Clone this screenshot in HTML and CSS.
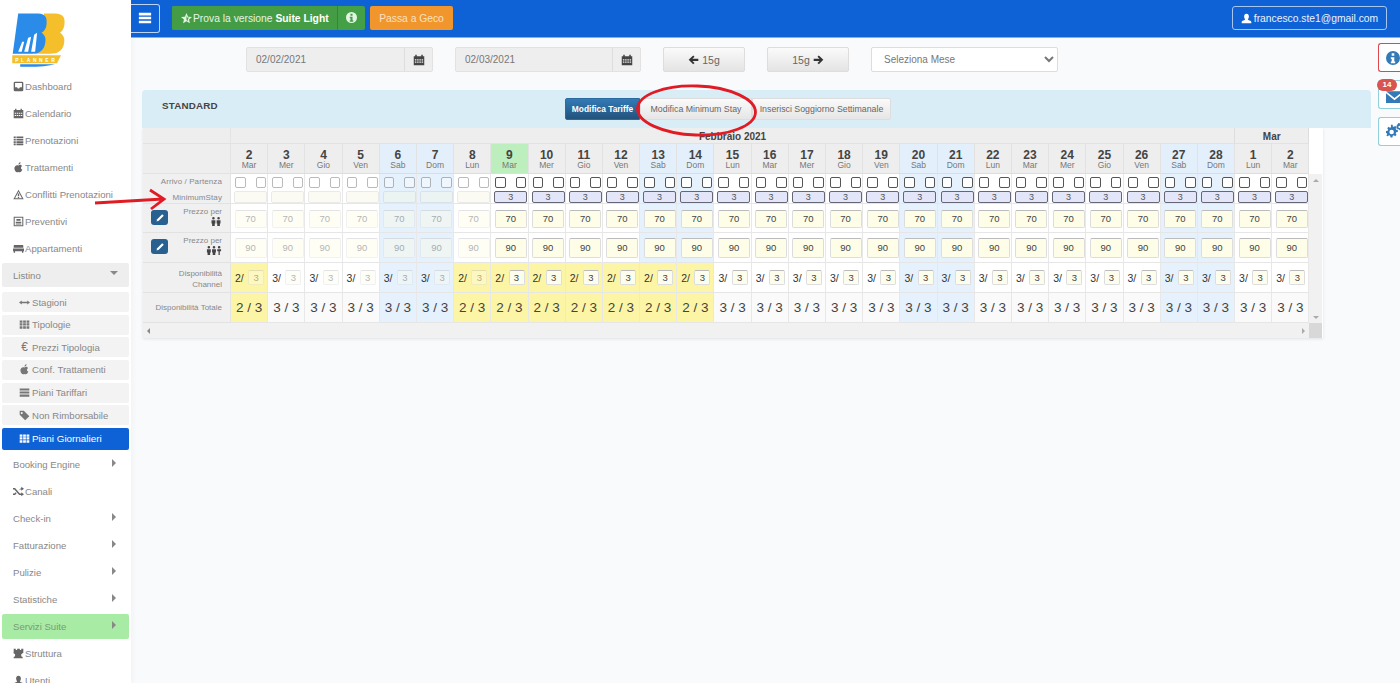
FILE: index.html
```html
<!DOCTYPE html>
<html lang="it">
<head>
<meta charset="utf-8">
<title>BB Planner</title>
<link rel="stylesheet" href="styles.css">
</head>
<body>
<svg class="defs" width="0" height="0">
<defs>
<symbol id="inbox" viewBox="0 0 16 16"><path d="M3 1h10a2 2 0 0 1 2 2v10a2 2 0 0 1-2 2H3a2 2 0 0 1-2-2V3a2 2 0 0 1 2-2zm0 2v6h3l1 2h2l1-2h3V3z"/></symbol>
<symbol id="cal" viewBox="0 0 16 16"><path d="M1 3h2V1h2v2h6V1h2v2h2v12H1zm1.500 4v1.500h2V7zm3 0v1.500h2V7zm3 0v1.500h2V7zm3 0v1.500h2V7zm-9 3v1.500h2V10zm3 0v1.500h2V10zm3 0v1.500h2V10zm3 0v1.500h2V10z"/></symbol>
<symbol id="list" viewBox="0 0 16 16"><path d="M1 2h3v2.500H1zm4 0h10v2.500H5zM1 5.500h3V8H1zm4 0h10V8H5zM1 9h3v2.500H1zm4 0h10v2.500H5zm-4 3.500h3V15H1zm4 0h10V15H5z"/></symbol>
<symbol id="apple" viewBox="0 0 16 16"><path d="M8 5c1-1 4-1.500 5 1-2 1-2 4 .5 5-1 2.500-2 4-3.500 4-1 0-1.500-.5-2-.5s-1 .5-2 .5C4 15 2 12 2 9c0-3 3-5.500 6-4zM8 4c0-2 1-3.500 3-4 0 2-1 3.500-3 4z"/></symbol>
<symbol id="warn" viewBox="0 0 16 16"><path d="M8 1l7.500 14H.5zm0 3L3 13.500h10zm-1 2.500h2v4H7zm0 5h2v1.500H7z" fill-rule="evenodd"/></symbol>
<symbol id="alt" viewBox="0 0 16 16"><path d="M1 1h14v14H1zm1.500 1.500v11h11v-11zM5 4.500h6V7H5zM4 8.500h8V10H4zm0 2.500h8v1.500H4z" fill-rule="evenodd"/></symbol>
<symbol id="bed" viewBox="0 0 16 16"><path d="M2 3h12a1 1 0 0 1 1 1v3H1V4a1 1 0 0 1 1-1zM0 8h16v4h-1v2h-2v-2H3v2H1v-2H0z"/></symbol>
<symbol id="arrows" viewBox="0 0 16 16"><path d="M0 8l4-3v2h8V5l4 3-4 3V9H4v2z"/></symbol>
<symbol id="grid" viewBox="0 0 16 16"><path d="M1 2h4v3.300H1zm5 0h4v3.300H6zm5 0h4v3.300h-4zM1 6.300h4v3.300H1zm5 0h4v3.300H6zm5 0h4v3.300h-4zM1 10.700h4V14H1zm5 0h4V14H6zm5 0h4V14h-4z"/></symbol>
<symbol id="menu" viewBox="0 0 16 16"><path d="M1 2h14v3H1zm0 4.500h14v3H1zM1 11h14v3H1z"/></symbol>
<symbol id="tag" viewBox="0 0 16 16"><path d="M1 1h6l8 8-6 6-8-8zm3 2a1.500 1.500 0 1 0 0 3 1.500 1.500 0 0 0 0-3z" fill-rule="evenodd"/></symbol>
<symbol id="shuffle" viewBox="0 0 16 16"><path d="M0 3h3l7 8h2V9l4 3-4 3v-2H9L2 5H0zm0 8h2l2-2 1.300 1.500L3 13H0zM9 5.500L12 3V1l4 3-4 3V5h-2L8 6.800z"/></symbol>
<symbol id="tower" viewBox="0 0 16 16"><path d="M1 1h3v2h2V1h4v2h2V1h3v6l-3 2v3l2 1v2H1v-2l2-1V9L0 7h1z"/></symbol>
<symbol id="user" viewBox="0 0 16 16"><path d="M8 1c2.200 0 3.500 1.700 3.500 4S10 9 10 9.500c0 1 5 1.500 5 3.500v2H1v-2c0-2 5-2.500 5-3.500C6 9 4.500 7.300 4.500 5S5.800 1 8 1z"/></symbol>
<symbol id="star" viewBox="0 0 16 16"><path d="M8 0l2.300 5.300 5.700.5-4.300 3.800L13 15 8 12l-5 3 1.300-5.400L0 5.800l5.700-.5zm0 4v6l2.500 1.500-.7-2.800 2.100-1.900-2.800-.2z" fill-rule="evenodd"/></symbol>
<symbol id="info" viewBox="0 0 16 16"><path d="M8 0a8 8 0 1 1 0 16A8 8 0 0 1 8 0zM6.500 2.500v3h3v-3zM5.500 7v2h1v3h-1v2h5v-2h-1V7z" fill-rule="evenodd"/></symbol>
<symbol id="left" viewBox="0 0 16 16"><path d="M7.500 2l2 2-3 3H15v3H6.500l3 3-2 2L1 8.500z"/></symbol>
<symbol id="right" viewBox="0 0 16 16"><path d="M8.500 2l-2 2 3 3H1v3h8.500l-3 3 2 2L15 8.500z"/></symbol>
<symbol id="mail" viewBox="0 0 16 16"><path d="M0 3h16L8 9.500zm0 2l8 6.500L16 5v9H0z"/></symbol>
<symbol id="gears" viewBox="0 0 16 16"><path d="M6 3l1 .4 1.200-.8 1.200 1.200-.8 1.200.4 1 1.500.3v1.700l-1.500.3-.4 1 .8 1.200-1.200 1.200-1.200-.8-1 .4-.3 1.500H4l-.3-1.500-1-.4-1.200.8L.3 11.300l.8-1.200-.4-1L0 8.800V7.100l1.500-.3.4-1-.8-1.200 1.200-1.200 1.200.8 1-.4L4.300 1.500H6zM5 6a2 2 0 1 0 0 4 2 2 0 0 0 0-4zM12 0l.5 1 1-.2.6 1 1 .2v1.200l-.8.6.2 1-1 .6-.2 1h-1.200l-.6-.8-1 .2-.6-1-1-.2V3.400l.8-.6-.2-1 1-.6.2-1zm0 2.500a1 1 0 1 0 0 2 1 1 0 0 0 0-2z" fill-rule="evenodd"/></symbol>
<symbol id="pen" viewBox="0 0 16 16"><path d="M11.500 2l2.500 2.500L6 12.500 2.500 13.500 3.500 10z"/></symbol>
<symbol id="two" viewBox="0 0 18 14"><path d="M5 0a2 2 0 1 1 0 4 2 2 0 0 1 0-4zm8 0a2 2 0 1 1 0 4 2 2 0 0 1 0-4zM2 5h6v5H7v4H3v-4H2zm8 0h6v5h-1v4h-4v-4h-1z"/></symbol>
<symbol id="three" viewBox="0 0 24 14"><path d="M4 0a2 2 0 1 1 0 4 2 2 0 0 1 0-4zm8 0a2 2 0 1 1 0 4 2 2 0 0 1 0-4zm8 0a2 2 0 1 1 0 4 2 2 0 0 1 0-4zM1 5h6v5H6v4H2v-4H1zm8 0h6v5h-1v4h-4v-4H9zm8 0h6v3h-2v6h-2V8h-2z"/></symbol>
</defs>
</svg>

<div class="page">
  <aside class="side">
    <svg class="logo" viewBox="0 0 131 73" width="131" height="73">
      <path class="lg-y" d="M44 13.500h11c9 .5 10 5 9.500 10.500-.3 4-2 7-4.500 9 4 3 5 6 4 11-1.500 7-6 10-14 10H34z"/>
      <path class="lg-b" d="M18 13.500h20c8 .5 9 5 8.500 10.500-.3 4-2 7-5 9 4 3 4.500 6 3.500 11-1.500 7-6 10-13 10H12.500z"/>
      <path class="lg-w" d="M18 52l4-10 2 0-2.500 10zm6 0l4-14 3-1-3 15zm7 0l3-17 3-2-2 19z"/>
      <path class="lg-y" d="M12 55.500h49l-4 8H12z"/>
      <path class="lg-b" d="M20 64.500h35q-10 3-35 2.500z"/>
      <text class="lg-t" x="15" y="62">PLANNER</text>
    </svg>
    <nav class="nav">
      <a class="item"><svg class="ic"><use href="#inbox"/></svg>Dashboard</a>
      <a class="item"><svg class="ic"><use href="#cal"/></svg>Calendario</a>
      <a class="item"><svg class="ic"><use href="#list"/></svg>Prenotazioni</a>
      <a class="item"><svg class="ic"><use href="#apple"/></svg>Trattamenti</a>
      <a class="item"><svg class="ic"><use href="#warn"/></svg>Conflitti Prenotazioni</a>
      <a class="item"><svg class="ic"><use href="#alt"/></svg>Preventivi</a>
      <a class="item"><svg class="ic"><use href="#bed"/></svg>Appartamenti</a>
      <a class="item group open">Listino<span class="caret-d"></span></a>
      <div class="subs">
        <a class="sub"><svg class="ic"><use href="#arrows"/></svg>Stagioni</a>
        <a class="sub"><svg class="ic"><use href="#grid"/></svg>Tipologie</a>
        <a class="sub"><span class="euro">€</span>Prezzi Tipologia</a>
        <a class="sub"><svg class="ic"><use href="#apple"/></svg>Conf. Trattamenti</a>
        <a class="sub"><svg class="ic"><use href="#menu"/></svg>Piani Tariffari</a>
        <a class="sub"><svg class="ic"><use href="#tag"/></svg>Non Rimborsabile</a>
        <a class="sub active"><svg class="ic"><use href="#grid"/></svg>Piani Giornalieri</a>
      </div>
      <a class="item group">Booking Engine<span class="caret-r"></span></a>
      <a class="item"><svg class="ic"><use href="#shuffle"/></svg>Canali</a>
      <a class="item group">Check-in<span class="caret-r"></span></a>
      <a class="item group">Fatturazione<span class="caret-r"></span></a>
      <a class="item group">Pulizie<span class="caret-r"></span></a>
      <a class="item group">Statistiche<span class="caret-r"></span></a>
      <a class="item group suite">Servizi Suite<span class="caret-r"></span></a>
      <a class="item"><svg class="ic"><use href="#tower"/></svg>Struttura</a>
      <a class="item"><svg class="ic"><use href="#user"/></svg>Utenti</a>
    </nav>
  </aside>

  <main class="main">
    <header class="top">
      <button class="burger"><svg class="ic-b"><use href="#menu"/></svg></button>
      <div class="split">
        <span class="split-a"><svg class="ic"><use href="#star"/></svg>Prova la versione <b>Suite Light</b></span>
        <span class="split-b"><svg class="ic"><use href="#info"/></svg></span>
      </div>
      <button class="geco">Passa a Geco</button>
      <button class="account"><svg class="ic"><use href="#user"/></svg>francesco.ste1@gmail.com</button>
    </header>

    <div class="tools">
      <div class="date"><span class="date-v">02/02/2021</span><span class="date-a"><svg class="ic"><use href="#cal"/></svg></span></div>
      <div class="date d2"><span class="date-v">02/03/2021</span><span class="date-a"><svg class="ic"><use href="#cal"/></svg></span></div>
      <button class="step"><svg class="ic"><use href="#left"/></svg>15g</button>
      <button class="step">15g<svg class="ic after"><use href="#right"/></svg></button>
      <select class="month"><option>Seleziona Mese</option></select>
    </div>

    <section class="panel">
      <h2 class="title">STANDARD</h2>
      <div class="tabs">
        <button class="tab on">Modifica Tariffe</button>
        <button class="tab t2">Modifica Minimum Stay</button>
        <button class="tab t3">Inserisci Soggiorno Settimanale</button>
      </div>
    </section>

    <div class="sheet" id="sheet"></div>

    <div class="float">
      <a class="fb red"><svg class="fi"><use href="#info"/></svg></a>
      <a class="fb teal"><span class="badge">14</span><svg class="fi f-m"><use href="#mail"/></svg></a>
      <a class="fb teal"><svg class="fi f-g"><use href="#gears"/></svg></a>
    </div>
  </main>
</div>

<svg class="marks" viewBox="0 0 1400 683" width="1400" height="683">
  <ellipse cx="696.500" cy="110.500" rx="59" ry="24.500" transform="rotate(2 696.500 110.500)"/>
  <path d="M95 203L163 199M150 190L164 199L151 209"/>
</svg>
<script src="script.js"></script>
</body>
</html>
```
FILE: styles.css
```css
* { box-sizing: border-box; }
html, body { margin: 0; height: 683px; overflow: hidden; }
body { font-family: "Liberation Sans", Arial, sans-serif; background: #f8fafc; color: #444; }
.defs { position: absolute; }
.page { display: flex; width: 1400px; height: 683px; overflow: hidden; }

.side { width: 131px; flex: none; background: #fff; height: 683px; overflow: hidden; box-shadow: 2px 0 5px rgba(0,0,0,.03); }
.logo { display: block; height: 72.700px; }
.lg-b { fill: #2b8be8; }
.lg-y { fill: #f4bf2a; }
.lg-w { fill: #fff; }
.lg-t { font: bold 5px "Liberation Sans", sans-serif; letter-spacing: 2.6px; fill: #fff; }
.nav { display: flex; flex-direction: column; }
.item { height: 27px; flex: none; display: flex; align-items: center; padding-left: 13px; font-size: 9.600px; color: #888; position: relative; }
.ic { width: 11px; height: 11px; fill: currentColor; flex: none; margin-right: 1px; }
.item .ic { fill: #666; }
.group { margin: 0 2px; padding-left: 11px; }
.open { height: 24px; margin-top: 1.5px; margin-bottom: 1.5px; background: #eee; border-radius: 2px; }
.suite { height: 25px; margin-top: 1px; margin-bottom: 1px; background: #a8eba4; border-radius: 2px; color: #7c9a78; }
.caret-r, .caret-d { position: absolute; width: 0; height: 0; }
.caret-r { right: 13px; top: 50%; margin-top: -5px; border-left: 4px solid #888; border-top: 4px solid transparent; border-bottom: 4px solid transparent; }
.caret-d { right: 11px; top: 8px; border-top: 4px solid #888; border-left: 4px solid transparent; border-right: 4px solid transparent; }
.subs { display: flex; flex-direction: column; gap: 2.6px; margin-top: 3.5px; margin-bottom: 1px; }
.sub { height: 20px; margin: 0 2px; padding-left: 17px; display: flex; align-items: center; font-size: 9.600px; background: #f3f3f3; color: #888; border-radius: 2px; }
.sub .ic { fill: #777; margin-right: 2px; }
.euro { width: 11px; margin-right: 2px; font-size: 12px; color: #777; text-align: center; }
.active { background: #0f62d6; color: #fff; height: 22px; font-size: 9.900px; }
.active .ic { fill: #fff; }

.main { flex: 1; position: relative; min-width: 0; }
.top { height: 38px; background: #0f62d6; border-bottom: 1px solid #7fb0ea; display: flex; align-items: center; padding-right: 13px; }
button { font-family: inherit; padding: 0; cursor: pointer; }
.burger { width: 29px; height: 29px; margin-top: -1px; background: #0f62d6; border: 1px solid #bcd4f4; border-left: 0; border-radius: 0 3px 3px 0; display: flex; align-items: center; justify-content: center; }
.ic-b { width: 14px; height: 14px; fill: #fff; }
.split { margin-left: 12px; width: 193px; height: 24px; display: flex; background: #43a047; color: #e4f4e4; font-size: 10.300px; border-radius: 2px; margin-top: -1px; }
.split-a { flex: 1; display: flex; align-items: center; padding-left: 9px; white-space: pre; background: #449d44; border-radius: 2px 0 0 2px; }
.split-a b { color: #fff; }
.split-a .ic { margin-right: 1px; }
.split-b { width: 28px; display: flex; align-items: center; justify-content: center; border-left: 1px solid #398439; }
.split-b .ic { margin: 0 0 2px; }
.geco { margin-left: 5px; margin-top: -1px; width: 83px; height: 24px; background: #f0962c; border: 0; border-radius: 2px; color: #fbe0bf; font-size: 10.300px; }
.account { margin-left: auto; margin-top: -1px; width: 155px; height: 24px; background: #0f62d6; border: 1px solid #a6c6f0; border-radius: 3px; color: #eaf2fc; font-size: 10.300px; display: flex; align-items: center; justify-content: center; }
.account .ic { fill: #fff; margin-right: 2px; }

.tools { margin: 9px 0 0 115px; height: 25px; display: flex; gap: 22px; }
.date { width: 187px; display: flex; background: #eee; border: 1px solid #e2e2e2; border-radius: 2px; font-size: 10px; color: #777; }
.d2 { width: 186px; }
.date-v { flex: 1; padding-left: 9px; align-self: center; }
.date-a { width: 28px; display: flex; align-items: center; justify-content: center; border-left: 1px solid #ddd; }
.date-a .ic { margin: 0; width: 12px; height: 12px; fill: #444; }
.step { width: 82px; background: linear-gradient(#fafafa, #e4e4e4); border: 1px solid #ddd; border-radius: 2px; font-size: 10.500px; color: #666; display: flex; align-items: center; justify-content: center; }
.step .ic { fill: #333; margin-right: 3px; }
.step .after { margin: 0 0 0 3px; }
.month { width: 187px; background: #fff; border: 1px solid #ddd; border-radius: 2px; font: 10px "Liberation Sans", sans-serif; color: #777; padding-left: 8px; }

.panel { margin: 18px 0 0 11px; width: 1229px; height: 38px; background: #d9edf7; border-radius: 4px 4px 0 0; position: relative; display: flex; justify-content: center; }
.title { position: absolute; left: 20px; top: 10px; margin: 0; font-size: 9.800px; line-height: 12px; letter-spacing: .2px; color: #444; }
.tabs { display: flex; height: 22px; margin: 8px 0 0 -57px; }
.tab { font-size: 8.800px; color: #666; background: linear-gradient(#fafafa, #e6e6e6); border: 1px solid #ddd; }
.on { width: 75px; font-size: 8.400px; background: linear-gradient(#337ab7, #23527c); border-color: #2b6a9e; color: #fff; font-weight: bold; border-radius: 2px 0 0 2px; }
.t2 { width: 112px; }
.t3 { width: 139px; border-radius: 0 2px 2px 0; }

.sheet { margin-left: 12px; width: 1180px; display: grid; grid-template-columns: 88px repeat(29, 37.200px) 13px; grid-template-rows: 16px 30px 30px 29px 30px 30px 30px 15px; background: #fff; box-shadow: 0 1px 3px rgba(0,0,0,.1); }
.c { border-right: 1px solid #e8e8e8; border-bottom: 1px solid #e6e6e6; min-width: 0; }
.corner { background: #eee; border-right: 1px solid #e4e4e4; border-bottom: 1px solid #e2e2e2; }
.mon { background: #eee; font-size: 10px; font-weight: bold; text-align: center; line-height: 18px; color: #444; border-bottom: 1px solid #e2e2e2; border-right: 1px solid #ddd; overflow: hidden; }
.blank { background: #fff; }
.head { background: #eee; text-align: center; border-right: 1px solid #e2e2e2; border-bottom: 1px solid #ddd; padding-top: 5px; }
.head b { display: block; font-size: 12px; line-height: 12px; color: #444; }
.head span { display: block; font-size: 8.500px; line-height: 9px; color: #777; }
.head.we { background: #e3f0fc; }
.head.today { background: #bdeebd; }
.lab { background: #f0f0f0; font-size: 8px; color: #888; text-align: right; padding: 2px 8px 0 0; position: relative; border-right: 1px solid #e4e4e4; border-bottom: 1px solid #e2e2e2; line-height: 11px; }
.lab-ap { line-height: 16px; padding-top: 0; }
.lab-ap span { display: block; letter-spacing: .1px; }
.lab-d { padding-top: 5px; }
.lab-t { padding-top: 9px; }
.edit { position: absolute; left: 8px; top: 6px; width: 17px; height: 15px; background: #286090; border-radius: 3px; display: flex; align-items: center; justify-content: center; }
.edit svg { width: 10px; height: 10px; fill: #fff; }
.ppl { display: block; height: 9px; width: 12px; fill: #444; margin-left: auto; }
.ppl.w3 { width: 16px; }
.we { background: #e5f1fc; }
.ye { background: #fdf5a6; }
.ap { display: flex; flex-direction: column; padding: 3px 0 0 3px; }
.cks { display: flex; justify-content: space-between; padding: 0 1px 0 1px; width: 33px; }
.cks i { width: 10.500px; height: 10.500px; border: 1px solid #555; border-radius: 2px; background: #fff; }
.ms { margin-top: 3px; width: 33px; height: 12px; border: 1px solid #667; border-radius: 2px; background: #e3e5f8; font-size: 9px; line-height: 10px; text-align: center; color: #555; }
.off .ms { background: #f6f6e6; border-color: #ccc; }
.pr { padding: 6px 0 0 3.500px; }
.pr .pi { height: 18px; line-height: 16px; }
.pr-2 { padding-top: 5px; }
.pr-2 .pi { height: 20px; line-height: 18px; }
.pi { width: 32px; background: #fdfde8; border: 1px solid #ddd; border-top-color: #bbb; border-radius: 2px; font-size: 9.500px; text-align: center; color: #444; }
.chan { display: flex; align-items: center; padding-left: 4px; font-size: 10.500px; color: #333; }
.chan .pi { width: 16px; height: 15px; margin-left: auto; margin-right: 3px; line-height: 13px; background: #fdfdee; }
.tot { font-size: 13.500px; line-height: 30px; text-align: center; color: #444; background: #fafafa; }
.tot.we { background: #e5f1fc; }
.tot.ye { background: #fdf5a6; }
.off i, .off .ms, .off .pi { opacity: .4; }
.sb-v { grid-column: 31; grid-row: 3 / span 5; background: #f1f1f1; position: relative; }
.sb-h { grid-column: 1 / span 30; grid-row: 8; background: #f1f1f1; position: relative; }
.sb-c { grid-column: 31; grid-row: 8; background: #d8d8d8; }
.up, .dn, .lt, .rt { position: absolute; width: 0; height: 0; }
.up { left: 4px; top: 5px; border-bottom: 3px solid #aaa; border-left: 3px solid transparent; border-right: 3px solid transparent; }
.dn { left: 4px; bottom: 4px; border-top: 3px solid #aaa; border-left: 3px solid transparent; border-right: 3px solid transparent; }
.lt { left: 4px; top: 5px; border-right: 3px solid #888; border-top: 3px solid transparent; border-bottom: 3px solid transparent; }
.rt { right: 4px; top: 5px; border-left: 3px solid #aaa; border-top: 3px solid transparent; border-bottom: 3px solid transparent; }

.float { position: absolute; right: 0; top: 43px; display: flex; flex-direction: column; gap: 8px; width: 22px; }
.fb { height: 29px; background: #fff; border: 1px solid #8fd0dd; border-right: 0; border-radius: 3px 0 0 3px; position: relative; display: flex; align-items: center; padding-left: 7px; overflow: visible; }
.red { border-color: #e0474c; }
.fi { width: 14px; height: 14px; fill: #337ab7; flex: none; }
.f-m { width: 17px; height: 17px; margin-top: 4px; }
.f-g { width: 18px; height: 18px; }
.badge { position: absolute; left: -2px; top: -2px; width: 20px; height: 12px; background: #d9534f; color: #fff; font-size: 8px; font-weight: bold; line-height: 12px; text-align: center; border-radius: 6px; }

.marks { position: absolute; left: 0; top: 0; pointer-events: none; }
.marks ellipse, .marks path { fill: none; stroke: #e01b24; stroke-width: 2.800; }
```
FILE: script.js
```js
var names = ['Mar', 'Mer', 'Gio', 'Ven', 'Sab', 'Dom', 'Lun'];
var days = [];
for (var n = 0; n < 29; n++) {
  var name = names[n % 7];
  days.push({
    num: n < 27 ? n + 2 : n - 26,
    name: name,
    we: n < 27 && (name === 'Sab' || name === 'Dom'),
    today: n === 7,
    off: n < 7,
    low: n === 0 || (n >= 6 && n <= 12)
  });
}
function cells(fn) {
  return days.map(fn).join('');
}
var weCls = function (d) { return d.we ? ' we' : ''; };
var offCls = function (d) { return d.off ? ' off' : ''; };
var html = '';
html += '<div class="corner"></div><div class="mon" style="grid-column:span 27">Febbraio 2021</div><div class="mon" style="grid-column:span 2">Mar</div><div class="blank"></div>';
html += '<div class="corner"></div>' + cells(function (d) {
  return '<div class="head' + weCls(d) + (d.today ? ' today' : '') + '"><b>' + d.num + '</b><span>' + d.name + '</span></div>';
}) + '<div class="blank"></div>';
html += '<div class="lab lab-ap"><span>Arrivo / Partenza</span><span>MinimumStay</span></div>' + cells(function (d) {
  return '<div class="c ap' + weCls(d) + offCls(d) + '"><div class="cks"><i></i><i></i></div><div class="ms">' + (d.off ? '' : '3') + '</div></div>';
});
html += '<div class="sb-v"><span class="up"></span><span class="dn"></span></div>';
html += '<div class="lab"><a class="edit"><svg><use href="#pen"/></svg></a>Prezzo per<svg class="ppl"><use href="#two"/></svg></div>' + cells(function (d) {
  return '<div class="c pr' + weCls(d) + offCls(d) + '"><div class="pi">70</div></div>';
});
html += '<div class="lab"><a class="edit"><svg><use href="#pen"/></svg></a>Prezzo per<svg class="ppl w3"><use href="#three"/></svg></div>' + cells(function (d) {
  return '<div class="c pr pr-2' + weCls(d) + offCls(d) + '"><div class="pi">90</div></div>';
});
html += '<div class="lab lab-d">Disponibilità<br>Channel</div>' + cells(function (d) {
  return '<div class="c chan' + (d.low ? ' ye' : weCls(d)) + offCls(d) + '">' + (d.low ? 2 : 3) + '/<div class="pi">3</div></div>';
});
html += '<div class="lab lab-t">Disponibilità Totale</div>' + cells(function (d) {
  return '<div class="c tot' + (d.low ? ' ye' : weCls(d)) + '">' + (d.low ? 2 : 3) + ' / 3</div>';
});
html += '<div class="sb-h"><span class="lt"></span><span class="rt"></span></div><div class="sb-c"></div>';
document.getElementById('sheet').innerHTML = html;
```
